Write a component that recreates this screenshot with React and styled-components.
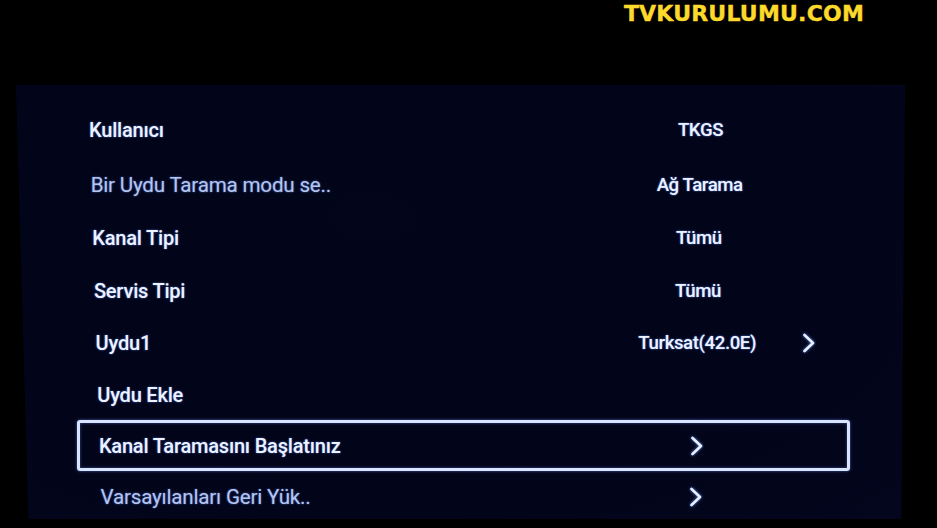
import React from 'react'
import styled, { createGlobalStyle } from 'styled-components'

const GlobalStyle = createGlobalStyle`
  html, body {
    margin: 0;
    padding: 0;
    background: #000;
  }
  body {
    font-family: Roboto, "Liberation Sans", sans-serif;
  }
`;

const Screen = styled.div`
  width: 937px;
  height: 528px;
  background: #000;
  display: flex;
  flex-direction: column;
  overflow: hidden;
`;

const Header = styled.div`
  height: 85px;
  flex-shrink: 0;
  display: flex;
  justify-content: flex-end;
  align-items: flex-start;
  padding-right: 73px;
  box-sizing: border-box;
`;

const Watermark = styled.div`
  margin-top: 1px;
  font-family: "DejaVu Sans", "Liberation Sans", sans-serif;
  font-weight: 700;
  font-size: 22px;
  letter-spacing: 0.2px;
  color: #fcd92b;
  line-height: 26px;
  -webkit-text-stroke: 0.4px #fcd92b;
`;

const Panel = styled.div`
  margin-left: 16px;
  width: 889px;
  height: 434px;
  flex-shrink: 0;
  background: radial-gradient(ellipse at 40% 30%, #020619 0%, #02041a 60%, #03061c 100%);
  box-shadow: 0 0 6px 2px #01030f;
  padding-top: 17.5px;
  box-sizing: border-box;
  display: flex;
  flex-direction: column;
  clip-path: polygon(0 0, 100% 0, 99.6% 100%, 1.4% 100%);
`;

const Row = styled.div`
  height: ${p => p.$h}px;
  flex-shrink: 0;
  margin-left: ${p => 51 + p.$i * 1.65}px;
  margin-right: 55px;
  display: grid;
  grid-template-columns: 1fr 180px 58px;
  align-items: center;
  box-sizing: border-box;
  border: 3px solid ${p => (p.$active ? '#d9e4ff' : 'transparent')};
  border-radius: 3px;
  box-shadow: ${p => (p.$active ? '0 0 3px rgba(120,160,255,0.6), inset 0 0 3px rgba(120,160,255,0.5)' : 'none')};
`;

const Label = styled.div`
  padding-left: 19px;
  font-size: ${p => (p.$dim ? '20.6px' : '20px')};
  font-weight: ${p => (p.$dim ? 400 : 500)};
  color: ${p => (p.$dim ? '#b7c4ec' : '#eef2ff')};
  text-shadow: 0 0 2px rgba(90, 140, 255, 0.8);
  white-space: nowrap;
  letter-spacing: -0.2px;
`;

const Value = styled.div`
  display: flex;
  justify-content: center;
  align-items: center;
  font-size: 18.6px;
  font-weight: 500;
  color: #eef2ff;
  text-shadow: 0 0 2px rgba(90, 140, 255, 0.9);
  white-space: nowrap;
  letter-spacing: -0.4px;
  margin-left: ${p => p.$shift || 0}px;
`;

const Side = styled.div`
  display: flex;
  align-items: center;
  padding-left: 13px;
`;

const Chevron = () => (
  <svg width="14" height="20" viewBox="0 0 14 20" style={{ filter: 'drop-shadow(0 0 1.5px rgba(100,150,255,0.9))' }}>
    <polyline points="2.5,2 11,10 2.5,18" fill="none" stroke="#e8eeff" strokeWidth="2.6" strokeLinecap="round" strokeLinejoin="round" />
  </svg>
);

// row heights follow the slight perspective of the photographed screen
const rows = [
  { label: 'Kullanıcı', value: 'TKGS', h: 55 },
  { label: 'Bir Uydu Tarama modu se..', value: 'Ağ Tarama', dim: true, h: 54 },
  { label: 'Kanal Tipi', value: 'Tümü', h: 53 },
  { label: 'Servis Tipi', value: 'Tümü', h: 52.5 },
  { label: 'Uydu1', value: 'Turksat(42.0E)', side: true, h: 52.5 },
  { label: 'Uydu Ekle', h: 50.5 },
  { label: 'Kanal Taramasını Başlatınız', arrow: true, active: true, h: 51 },
  { label: 'Varsayılanları Geri Yük..', arrow: true, dim: true, h: 51 },
];

function App() {
  return (
    <Screen>
      <GlobalStyle />
      <Header>
        <Watermark>TVKURULUMU.COM</Watermark>
      </Header>
      <Panel>
        {rows.map((r, i) => (
          <Row key={r.label} $i={i} $h={r.h} $active={r.active}>
            <Label $dim={r.dim}>{r.label}</Label>
            <Value $shift={r.arrow ? 5 - i * 1.65 : 3 - i * 1.65}>{r.arrow ? <Chevron /> : r.value}</Value>
            <Side>{r.side && <Chevron />}</Side>
          </Row>
        ))}
      </Panel>
    </Screen>
  )
}

export default App
